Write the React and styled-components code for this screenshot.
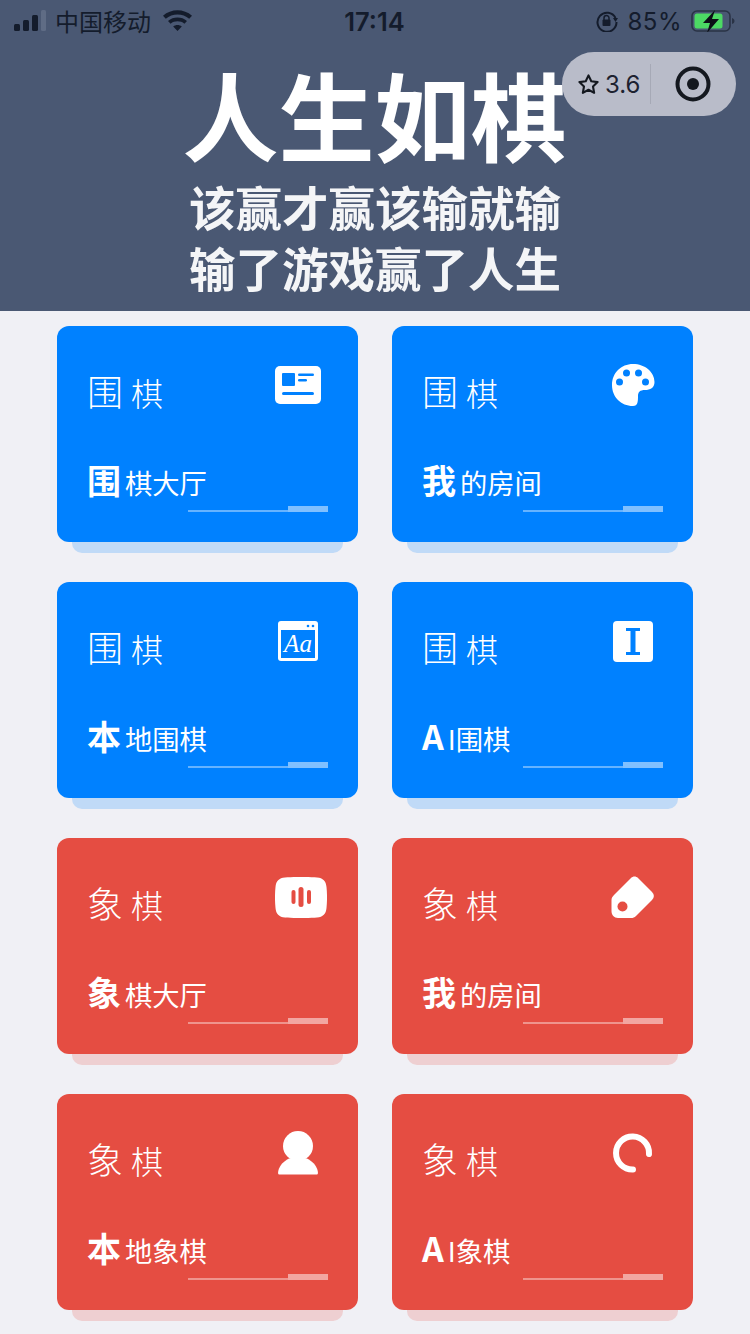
import React from "react";
import styled, { createGlobalStyle } from "styled-components";

const CJK = `"Noto Sans CJK SC", "Noto Sans", sans-serif`;

const Global = createGlobalStyle`
  html, body {
    margin: 0;
    padding: 0;
    background: #f0f0f5;
    font-family: ${CJK};
  }
`;

const Page = styled.div`
  width: 750px;
  height: 1334px;
  overflow: hidden;
  background: #f0f0f5;
`;

const Header = styled.header`
  position: relative;
  height: 311px;
  box-sizing: border-box;
  background: #4a5873;
  display: flex;
  flex-direction: column;
  align-items: center;
`;

const StatusBar = styled.div`
  align-self: stretch;
  height: 42px;
  display: flex;
  align-items: center;
  justify-content: space-between;
  padding: 0 15px 2px 14px;
  color: #141c2c;
  font-size: 24px;
`;

const StatusSide = styled.div`
  width: 250px;
  display: flex;
  align-items: center;
  justify-content: ${p => (p.$end ? "flex-end" : "flex-start")};
  gap: ${p => p.$gap}px;
`;

const Carrier = styled.span`
  font-family: "Noto Sans CJK SC", sans-serif;
  font-size: 24px;
  line-height: 30px;
`;

const Clock = styled.span`
  font-family: "Inter", sans-serif;
  font-weight: 600;
  font-size: 25.5px;
`;

const Percent = styled.span`
  font-family: "Inter", sans-serif;
  font-size: 24px;
  letter-spacing: 0.5px;
`;

const Slogan = styled.div`
  color: #fff;
  text-align: center;
  font-weight: 700;
  filter: blur(0.6px);
`;

const BigLine = styled.div`
  font-size: 96px;
  line-height: 96px;
  margin-top: 21px;
  margin-right: 1px;
`;

const SmallLine = styled.div`
  font-size: 46.5px;
  line-height: 61px;
  font-weight: 700;
  color: #f4f5f7;
  &:nth-child(2) {
    margin-top: 14px;
  }
`;

const Capsule = styled.div`
  position: absolute;
  left: 562px;
  top: 52px;
  width: 174px;
  height: 64px;
  border-radius: 32px;
  background: #b9bcc9;
  display: flex;
  align-items: center;
  box-sizing: border-box;
  padding-left: 15px;
  color: #1d2230;
`;

const Score = styled.span`
  font-family: "Inter", "Liberation Sans", sans-serif;
  font-size: 24px;
  margin-left: 5px;
  width: 45px;
`;

const Divider = styled.div`
  width: 1px;
  height: 40px;
  background: #a6a9b6;
`;

const TargetSlot = styled.div`
  flex: 1;
  display: flex;
  justify-content: center;
  padding-right: 2px;
`;

const Grid = styled.main`
  isolation: isolate;
  display: grid;
  grid-template-columns: 301px 301px;
  grid-auto-rows: 216px;
  column-gap: 34px;
  row-gap: 40px;
  padding: 15px 57px 0;
`;

const Card = styled.section`
  position: relative;
  border-radius: 12px;
  background: ${p => p.$color};
  color: #fff;
  display: flex;
  flex-direction: column;
  box-sizing: border-box;
  padding: 0 30px 30px 30px;

  &::before {
    content: "";
    position: absolute;
    z-index: -1;
    left: 15px;
    right: 15px;
    bottom: -11px;
    height: 40px;
    border-radius: 10px;
    background: ${p => p.$color};
    opacity: 0.2;
  }
`;

const CardTop = styled.div`
  height: 96px;
  display: flex;
  justify-content: space-between;
`;

const CardTitle = styled.div`
  margin-top: 42px;
  font-size: 32px;
  line-height: 44px;
  font-weight: 300;
  display: flex;
  align-items: baseline;
`;

const TitleLead = styled.span`
  font-size: 36px;
  margin-right: 8px;
`;

const IconSlot = styled.div`
  width: 60px;
  height: 60px;
  margin-top: 29px;
  display: flex;
  align-items: center;
  justify-content: center;
`;

const CardLabel = styled.div`
  margin-top: 38px;
  height: 40px;
  display: flex;
  align-items: baseline;
  font-size: 27.3px;
  line-height: 40px;
`;

const Initial = styled.span`
  font-size: 34px;
  font-weight: 700;
  margin-right: 4px;
`;

const Rule = styled.div`
  margin-top: auto;
  align-self: flex-end;
  width: 140px;
  height: 6px;
  display: flex;
  align-items: flex-end;
`;

const RuleThin = styled.div`
  flex: 1;
  height: 2px;
  background: rgba(255, 255, 255, 0.4);
`;

const RuleThick = styled.div`
  width: 40px;
  height: 6px;
  background: rgba(255, 255, 255, 0.5);
`;

const VoiceSvg = styled.svg`
  flex: none;
  margin-left: 6px;
`;

const IdIcon = ({ color }) => (
  <svg width="46" height="38" viewBox="0 0 46 38">
    <rect width="46" height="38" rx="5" fill="#fff" />
    <rect x="7" y="7" width="13" height="13" rx="1" fill={color} />
    <rect x="23" y="7.5" width="16" height="2.6" rx="1.3" fill={color} />
    <rect x="23" y="13" width="9" height="2.6" rx="1.3" fill={color} />
    <rect x="7" y="26" width="32" height="3" rx="1.5" fill={color} />
  </svg>
);

const PaletteIcon = ({ color }) => (
  <svg width="43" height="42" viewBox="0 0 43 42">
    <path d="M21 0C33 0 42.500 8 42.500 18C42.500 24 38 26 33 26C28 26 26 28 26 32C26 37 26 42 21 42C9 42 0 33 0 21C0 9 9 0 21 0Z" fill="#fff" />
    <circle cx="14.500" cy="9" r="3.500" fill={color} />
    <circle cx="26.500" cy="9" r="3.500" fill={color} />
    <circle cx="7.500" cy="18" r="3.500" fill={color} />
    <circle cx="33.500" cy="18" r="3.500" fill={color} />
  </svg>
);

const FontIcon = ({ color }) => (
  <svg width="40" height="40" viewBox="0 0 40 40">
    <rect width="40" height="40" rx="3" fill="#fff" />
    <rect x="3" y="9" width="34" height="28" fill={color} />
    <circle cx="30" cy="5" r="1.3" fill={color} />
    <circle cx="35" cy="5" r="1.3" fill={color} />
    <text x="20" y="31" textAnchor="middle" fontFamily="Liberation Serif" fontStyle="italic" fontSize="25" fill="#fff">Aa</text>
  </svg>
);

const CursorIcon = ({ color }) => (
  <svg width="40" height="41" viewBox="0 0 40 41">
    <rect width="40" height="41" rx="4" fill="#fff" />
    <path d="M13 7h14v3h-4.500v21h4.500v3H13v-3h4.500V10H13z" fill={color} />
  </svg>
);

const VoiceIcon = ({ color }) => (
  <VoiceSvg width="52" height="41" viewBox="0 0 52 41">
    <path d="M10 .5C18-.2 34-.2 42 .5C48 1 51 4 51.500 10C52.200 17 52.200 24 51.500 31C51 37 48 40 42 40.500C34 41.200 18 41.200 10 40.500C4 40 1 37 .5 31C-.2 24-.2 17 .5 10C1 4 4 1 10 .5Z" fill="#fff" />
    <rect x="16.500" y="13" width="4" height="14" rx="2" fill={color} />
    <rect x="23.500" y="10" width="5" height="20" rx="2.500" fill={color} />
    <rect x="32" y="13" width="4" height="14" rx="2" fill={color} />
  </VoiceSvg>
);

const TagIcon = ({ color }) => (
  <svg width="44" height="42" viewBox="0 0 44 42">
    <path d="M20 2C22 0 25 0 27 2L41 16C43.500 18.500 43.500 21.500 41 24L25 40C23.500 41.500 22 42 20 42L7 42C3 42 .5 39 .5 35L.5 24C.5 22 1.500 20.500 3 19Z" fill="#fff" />
    <circle cx="11.500" cy="30.500" r="5" fill={color} />
  </svg>
);

const UserIcon = () => (
  <svg width="40" height="44" viewBox="0 0 40 44">
    <circle cx="20" cy="15" r="15" fill="#fff" />
    <path d="M1.500 43.500C-.5 43.500 0 41 .5 39C2 34 6 30 11 27.500H29C34 30 38 34 39.500 39C40 41 40.500 43.500 38.500 43.500Z" fill="#fff" />
  </svg>
);

const LoadingIcon = () => (
  <svg width="40" height="40" viewBox="0 0 40 40">
    <path d="M36 21A16.500 16.500 0 1 0 20 36.500" fill="none" stroke="#fff" strokeWidth="6" strokeLinecap="round" />
  </svg>
);

const BLUE = "#0081ff";
const RED = "#e54d42";

const cards = [
  { lead: "围", first: "围", rest: "棋大厅", color: BLUE, Icon: IdIcon },
  { lead: "围", first: "我", rest: "的房间", color: BLUE, Icon: PaletteIcon },
  { lead: "围", first: "本", rest: "地围棋", color: BLUE, Icon: FontIcon },
  { lead: "围", first: "A", rest: "I围棋", color: BLUE, Icon: CursorIcon },
  { lead: "象", first: "象", rest: "棋大厅", color: RED, Icon: VoiceIcon },
  { lead: "象", first: "我", rest: "的房间", color: RED, Icon: TagIcon },
  { lead: "象", first: "本", rest: "地象棋", color: RED, Icon: UserIcon },
  { lead: "象", first: "A", rest: "I象棋", color: RED, Icon: LoadingIcon },
];

export default function App() {
  return (
    <Page>
      <Global />
      <Header>
        <StatusBar>
          <StatusSide $gap={9}>
            <svg width="32" height="22" viewBox="0 0 32 22">
              <rect x="0" y="14" width="6" height="7" rx="1.500" fill="#141c2c" />
              <rect x="9" y="10" width="6" height="11" rx="1.500" fill="#141c2c" />
              <rect x="18" y="5" width="6" height="16" rx="1.500" fill="#141c2c" />
              <rect x="27" y="0" width="5" height="21" rx="1.500" fill="#5f6c85" />
            </svg>
            <Carrier>中国移动</Carrier>
            <svg width="29" height="22" viewBox="0 0 29 22" style={{ marginLeft: 3 }}>
              <path d="M14.500 21l-4.300-4.600c2.400-2 6.200-2 8.600 0zM7.600 13.700 5 11c5.300-4.600 13.700-4.600 19 0l-2.600 2.700c-3.800-3.200-10-3.200-13.800 0zM2.800 8.700 0 5.800c8-7.400 21-7.400 29 0l-2.800 2.900C19.800 3 9.200 3 2.800 8.700z" fill="#141c2c" />
            </svg>
          </StatusSide>
          <Clock>17:14</Clock>
          <StatusSide $end $gap={9}>
            <svg width="22" height="22" viewBox="0 0 22 22">
              <path d="M19.500 8A9.500 9.500 0 1 0 20.500 12" fill="none" stroke="#141c2c" strokeWidth="2" />
              <path d="M17 8h5l-2.500 4z" fill="#141c2c" />
              <rect x="6.500" y="9.500" width="8" height="6.500" rx="1" fill="#141c2c" />
              <path d="M8 10V8a2.500 2.500 0 0 1 5 0v2" fill="none" stroke="#141c2c" strokeWidth="1.500" />
            </svg>
            <Percent>85%</Percent>
            <svg width="44" height="22" viewBox="0 0 44 22">
              <rect x="1" y="1" width="38" height="20" rx="5" fill="none" stroke="#2a3346" strokeWidth="1.600" />
              <rect x="3.500" y="3.500" width="28" height="15" rx="2.500" fill="#4cd964" />
              <path d="M41 8c1.500.5 2.500 1.500 2.500 3s-1 2.500-2.500 3z" fill="#2a3346" />
              <path d="M24 0 12 13h7l-3 10 12-14h-7z" fill="#0c0f17" />
            </svg>
          </StatusSide>
        </StatusBar>
        <Slogan>
          <BigLine>人生如棋</BigLine>
          <SmallLine>该赢才赢该输就输</SmallLine>
          <SmallLine>输了游戏赢了人生</SmallLine>
        </Slogan>
        <Capsule>
          <svg width="23" height="23" viewBox="0 0 24 24">
            <path d="M12 2.500l2.900 6.100 6.600.9-4.800 4.600 1.200 6.600L12 17.500l-5.900 3.200 1.200-6.600L2.500 9.500l6.600-.9z" fill="none" stroke="#14181f" strokeWidth="2.200" strokeLinejoin="round" />
          </svg>
          <Score>3.6</Score>
          <Divider />
          <TargetSlot>
            <svg width="36" height="36" viewBox="0 0 36 36">
              <circle cx="18" cy="18" r="15.500" fill="none" stroke="#14181f" strokeWidth="4" />
              <circle cx="18" cy="18" r="6" fill="#14181f" />
            </svg>
          </TargetSlot>
        </Capsule>
      </Header>
      <Grid>
        {cards.map(({ lead, first, rest, color, Icon }, i) => (
          <Card key={i} $color={color}>
            <CardTop>
              <CardTitle>
                <TitleLead>{lead}</TitleLead>棋
              </CardTitle>
              <IconSlot>
                <Icon color={color} />
              </IconSlot>
            </CardTop>
            <CardLabel>
              <Initial>{first}</Initial>
              {rest}
            </CardLabel>
            <Rule>
              <RuleThin />
              <RuleThick />
            </Rule>
          </Card>
        ))}
      </Grid>
    </Page>
  );
}
